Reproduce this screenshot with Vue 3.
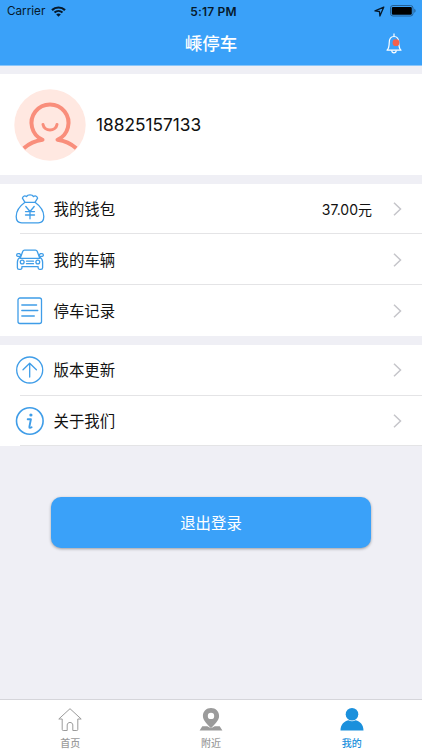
<template>
  <div class="page">
    <header class="header">
      <div class="status">
        <div class="carrier">
          <span>Carrier</span>
          <svg width="15" height="11" viewBox="0 0 15 11" fill="none" stroke="#06192b">
            <path d="M1 4.100C4.600.6 10.400.6 14 4.100" stroke-width="2.200" />
            <path d="M3.500 6.600c2.300-2.100 5.700-2.100 8 0" stroke-width="2" />
            <path d="M7.500 10.700L5.200 8.400c1.300-1.200 3.300-1.200 4.600 0z" fill="#06192b" stroke="none" />
          </svg>
        </div>
        <span class="time">5:17 PM</span>
        <div class="power">
          <svg width="11" height="11" viewBox="0 0 11 11" fill="none" stroke="#06192b" stroke-width="1.300">
            <path d="M9.800 1.100L1 4.900l4.500.6.4 4.500z" stroke-linejoin="round" />
          </svg>
          <svg width="26" height="12" viewBox="0 0 26 12">
            <rect x=".5" y=".5" width="22.500" height="10.500" rx="2.500" fill="none" stroke="#245f94" />
            <rect x="1.800" y="1.900" width="20" height="7.800" rx="1.200" fill="#000" />
            <path d="M24.300 3.800c1.600.4 1.600 3.600 0 4z" fill="#245f94" />
          </svg>
        </div>
      </div>
      <div class="navbar">
        <h1>嵊停车</h1>
        <svg class="bell" width="16" height="21" viewBox="0 0 16 21" fill="none" stroke="#fff" stroke-width="1.200">
          <path d="M8 .5v2.800M1 17.200h14c-1.800-1.700-2.200-3-2.200-7.200C12.800 5.800 11 3.500 8 3.500S3.200 5.800 3.200 10c0 4.200-.4 5.500-2.200 7.200z" stroke-linejoin="round" />
          <path d="M5.700 17.400c.2 3.200 4.400 3.200 4.600 0" />
          <circle cx="10" cy="9.700" r="3.400" fill="#f4604c" stroke="none" />
        </svg>
      </div>
    </header>

    <section class="profile">
      <svg class="avatar" width="72" height="72" viewBox="0 0 72 72">
        <circle cx="36" cy="36" r="35.700" fill="#ffe8e1" />
        <g fill="none" stroke="#f98e7b" stroke-width="4">
          <path d="M9.800 59.300c5.200-4.600 11.700-7.500 18.700-8.500A18.500 18.500 0 1 1 43.500 50.800c7 1 13.500 3.900 18.700 8.500" stroke-linejoin="round" />
          <path d="M29 35.500c1.300 7.300 12.700 7.300 14 0" stroke-width="3" stroke-linecap="round" />
        </g>
      </svg>
      <span class="phone">18825157133</span>
    </section>

    <section v-for="(group, i) in groups" :key="i" class="group">
      <div v-for="item in group" :key="item.icon" class="row">
        <svg class="icon" width="30" height="30" viewBox="0 0 30 30">
          <template v-if="item.icon === 'wallet'">
            <path d="M10 8.300C3.500 13 1.200 18.500 1.200 22.500c0 4 2 6.300 5.500 6.300h16.600c3.500 0 5.500-2.300 5.500-6.300 0-4-2.300-9.500-8.800-14.200z" />
            <path d="M10 8.300L7.400 4.200C8 1.800 10 1.400 11.500 2.600 12.700.4 17.300.4 18.500 2.600 20 1.400 22 1.800 22.600 4.200L20 8.300" />
            <path d="M10.800 12.500l4.200 5 4.200-5M15 17.500v7.300M10.500 17.600h9M10.500 21h9" />
          </template>
          <template v-else-if="item.icon === 'car'">
            <path d="M5.200 13.300l2.600-7c.3-.8.8-1.200 1.700-1.200h11c.9 0 1.400.4 1.700 1.200l2.600 7z" />
            <path d="M5.300 11.300H2.800c-1.600 0-1.500-2.600.2-2.600h1.700l1.200 1.600M24.700 11.300h2.500c1.600 0 1.500-2.600-.2-2.600h-1.700l-1.200 1.600" />
            <path d="M5.200 12.300c-2 1.200-2.800 2.600-2.800 4.700v5.700c0 1.300.5 1.600 1.700 1.600h1.300c1.100 0 1.500-.5 1.500-1.500v-1.200h16.200v1.200c0 1 .4 1.500 1.500 1.500h1.300c1.200 0 1.700-.3 1.700-1.600V17c0-2.100-.8-3.500-2.800-4.700" />
            <circle cx="7.200" cy="17" r="1.900" />
            <circle cx="22.800" cy="17" r="1.900" />
            <path d="M11.500 16.200h7M11.500 18.700h7" />
          </template>
          <template v-else-if="item.icon === 'record'">
            <rect x="3" y="2" width="23.500" height="25.500" rx="2" />
            <path d="M6.800 9h14.800M6.800 14.500h16M6.800 20h12.500" />
          </template>
          <template v-else-if="item.icon === 'update'">
            <circle cx="14.700" cy="15" r="13" />
            <path d="M14.700 22V8.500M8 14.800l6.700-6.500 6.700 6.500" />
          </template>
          <template v-else>
            <circle cx="14.800" cy="15" r="13.300" stroke-width="1.600" />
            <path d="M12.700 13.300h3.200l-1.500 7.300c-.3 1.600.8 1.600 2.200.7" stroke-width="1.900" />
            <circle cx="15.900" cy="9" r="1.600" fill="#3f9de8" stroke="none" />
          </template>
        </svg>
        <div class="line">
          <span class="label">{{ item.label }}</span>
          <span v-if="item.value" class="value">{{ item.value }}</span>
          <svg class="arrow" width="9" height="14" viewBox="0 0 9 14">
            <path d="M1 .8L7.500 7 1 13.200" fill="none" stroke="#c5c5ca" stroke-width="1.500" />
          </svg>
        </div>
      </div>
    </section>

    <button class="logout">退出登录</button>

    <nav class="tabbar">
      <a v-for="tab in tabs" :key="tab.icon" class="tab" :class="{ active: tab.icon === current }" @click="current = tab.icon">
        <svg width="26" height="26" viewBox="0 0 26 26">
          <path v-if="tab.icon === 'home'" d="M13 1.700L1.800 12h3.400v10.500c0 .7.300 1 1 1h4V18c0-3.400 5.600-3.400 5.600 0v5.500h4c.7 0 1-.3 1-1V12h3.400z" fill="none" stroke="currentColor" stroke-linejoin="round" />
          <g v-else-if="tab.icon === 'near'" fill="currentColor">
            <path fill-rule="evenodd" d="M13 1C8.300 1 4.900 4.500 4.900 8.900c0 4.700 4.400 8 8.100 12.300 3.700-4.300 8.100-7.600 8.100-12.300C21.100 4.500 17.700 1 13 1zm0 4.700a3.200 3.200 0 1 1 0 6.400 3.200 3.200 0 0 1 0-6.400z" />
            <path d="M4.300 19.200h5l3.700 2 3.700-2h5l2.700 4.300H1.600z" />
          </g>
          <g v-else fill="currentColor">
            <circle cx="13" cy="7.200" r="6.300" />
            <path d="M1.500 23.600c0-5.800 3.500-9.400 7.800-10.300 2.200 1.300 5.200 1.300 7.400 0 4.300.9 7.800 4.500 7.800 10.300z" />
          </g>
        </svg>
        <span>{{ tab.label }}</span>
      </a>
    </nav>
  </div>
</template>

<script setup>
import { ref } from 'vue'

const groups = [
  [
    { icon: 'wallet', label: '我的钱包', value: '37.00元' },
    { icon: 'car', label: '我的车辆' },
    { icon: 'record', label: '停车记录' }
  ],
  [
    { icon: 'update', label: '版本更新' },
    { icon: 'about', label: '关于我们' }
  ]
]

const tabs = [
  { icon: 'home', label: '首页' },
  { icon: 'near', label: '附近' },
  { icon: 'mine', label: '我的' }
]

const current = ref('mine')
</script>

<style>
body {
  margin: 0;
}
</style>

<style scoped>
.page {
  display: flex;
  flex-direction: column;
  height: 750px;
  background: #efeff5;
  color: #111;
  font-family: Inter, "Noto Sans CJK SC", sans-serif;
  overflow: hidden;
}

svg {
  display: block;
  flex-shrink: 0;
}

.header {
  height: 66px;
  background: #3aa1f9;
  box-sizing: border-box;
  border-bottom: 1px solid #8ac6fa;
  flex-shrink: 0;
}

.status {
  display: grid;
  grid-template-columns: 1fr auto 1fr;
  align-items: center;
  height: 22px;
  padding: 0 6px 0 7px;
  font-size: 12px;
  color: #06192b;
}

.carrier {
  display: flex;
  align-items: center;
  gap: 6px;
  font-size: 11.7px;
}

.time {
  margin: 0 -2px 0 2px;
  font-weight: 600;
  letter-spacing: 0.2px;
}

.power {
  display: flex;
  align-items: center;
  justify-content: flex-end;
  gap: 5px;
}

.navbar {
  display: grid;
  grid-template-columns: 1fr auto 1fr;
  align-items: center;
  height: 42px;
  padding-right: 20px;
  color: #fff;
}

h1 {
  grid-column: 2;
  margin: 2px -20px 0 0;
  font-size: 17.5px;
  line-height: 24px;
  font-weight: 500;
}

.bell {
  justify-self: end;
}

.profile {
  display: flex;
  align-items: center;
  height: 101px;
  margin-top: 8px;
  padding-left: 14px;
  background: #fff;
  flex-shrink: 0;
}

.phone {
  margin-left: 10px;
  font-size: 17.3px;
}

.group {
  margin-top: 8.7px;
  background: #fff;
}

.row {
  display: flex;
  align-items: center;
  height: 50.8px;
  padding-left: 15px;
  background: linear-gradient(#e4e4e6, #e4e4e6) 20px 100% / 100% 1px no-repeat;
}

.group:nth-of-type(2) .row:last-child {
  background: none;
}

.icon {
  fill: none;
  stroke: #3f9de8;
  stroke-width: 1.3;
  stroke-linejoin: round;
  stroke-linecap: round;
}

.line {
  display: flex;
  flex: 1;
  align-items: center;
  padding: 0 20px 0 8.5px;
  font-size: 15.4px;
}

.label {
  padding-bottom: 2px;
}

.value {
  margin-left: auto;
  margin-right: 21px;
  padding-bottom: 1px;
  font-size: 14px;
}

.arrow {
  margin-left: auto;
}

.value + .arrow {
  margin-left: 0;
}

.logout {
  height: 51px;
  margin: 51px 51px 0;
  padding-bottom: 3px;
  border: 0;
  border-radius: 10px;
  background: #3aa1f9;
  box-shadow: 0 1px 3px rgba(0, 0, 0, 0.35);
  color: #fff;
  font-family: inherit;
  font-size: 15.4px;
  flex-shrink: 0;
}

.tabbar {
  display: flex;
  height: 51px;
  margin-top: auto;
  box-sizing: border-box;
  border-top: 1px solid #d5d5da;
  background: #fff;
}

.tab {
  display: flex;
  flex: 1;
  flex-direction: column;
  align-items: center;
  padding-top: 7px;
  color: #9b9b9b;
  font-size: 10px;
  line-height: 14px;
  font-weight: 500;
}

.tab span {
  margin-top: 3px;
}

.tab.active {
  color: #1b90dc;
}
</style>
